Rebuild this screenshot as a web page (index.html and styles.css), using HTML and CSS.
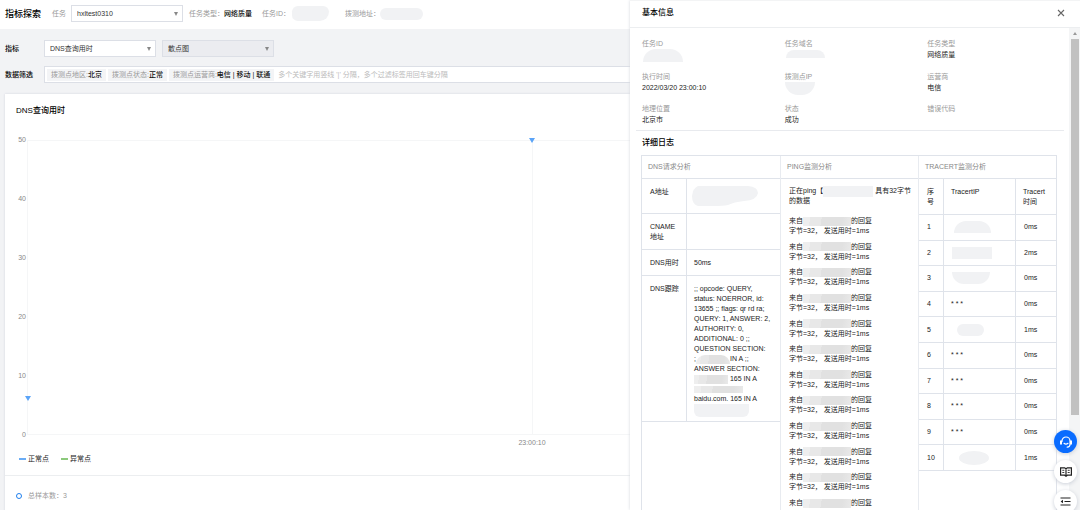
FILE: index.html
```html
<!DOCTYPE html>
<html lang="zh-CN">
<head>
<meta charset="utf-8">
<title>指标探索</title>
<link rel="stylesheet" href="styles.css">
</head>
<body>
<main class="page">
  <header class="topbar">
    <h1 class="page-title">指标探索</h1>
    <label class="muted" for="task">任务</label>
    <span class="select"><select id="task"><option>hxltest0310</option></select></span>
    <span class="fact"><span class="muted">任务类型：</span><b>网络质量</b></span>
    <span class="fact fact-id"><span class="muted">任务ID：</span><i class="mask mask-id"></i></span>
    <span class="fact"><span class="muted">拨测地址：</span><i class="mask mask-address"></i></span>
  </header>

  <section class="filters">
    <div class="filter-row">
      <label class="filter-name" for="metric">指标</label>
      <span class="select"><select id="metric"><option>DNS查询用时</option></select></span>
      <span class="select select-disabled"><select aria-label="图表类型" disabled><option>散点图</option></select></span>
    </div>
    <div class="filter-row">
      <label class="filter-name" for="filter">数据筛选</label>
      <div class="tagbox">
        <span class="tag">拨测点地区:<b>北京</b></span>
        <span class="tag">拨测点状态:<b>正常</b></span>
        <span class="tag">拨测点运营商:<b>电信 | 移动 | 联通</b></span>
        <input id="filter" type="text" placeholder="多个关键字用竖线 '|' 分隔，多个过滤标签用回车键分隔">
      </div>
    </div>
  </section>

  <section class="card">
    <h2 class="card-title">DNS查询用时</h2>
    <div class="chart">
      <div class="y-axis"><span>50</span><span>40</span><span>30</span><span>20</span><span>10</span><span>0</span></div>
      <div class="plot">
        <i class="point" style="left:0%;top:88%"></i>
        <i class="point" style="left:50%;top:0%"></i>
      </div>
      <div class="x-axis">23:00:10</div>
    </div>
    <div class="legend">
      <span class="legend-item"><i class="dash dash-ok"></i>正常点</span>
      <span class="legend-item"><i class="dash dash-bad"></i>异常点</span>
    </div>
    <div class="total"><i class="ring"></i>总样本数：3</div>
  </section>
</main>

<aside class="drawer">
  <header class="drawer-head">
    <h2 class="drawer-title">基本信息</h2>
    <button class="close" type="button" aria-label="关闭"><svg width="8" height="8" viewBox="0 0 8 8"><path d="M1 1l6 6M7 1L1 7" fill="none" stroke="#666" stroke-width="1.1"/></svg></button>
  </header>
  <div class="drawer-body">
    <div class="drawer-content">
      <dl class="info">
        <div><dt>任务ID</dt><dd><i class="mask dome"></i></dd></div>
        <div><dt>任务域名</dt><dd><i class="mask dome-low"></i></dd></div>
        <div><dt>任务类型</dt><dd>网络质量</dd></div>
        <div><dt>执行时间</dt><dd>2022/03/20 23:00:10</dd></div>
        <div><dt>拨测点IP</dt><dd><i class="mask bowl"></i></dd></div>
        <div><dt>运营商</dt><dd>电信</dd></div>
        <div><dt>地理位置</dt><dd>北京市</dd></div>
        <div><dt>状态</dt><dd>成功</dd></div>
        <div><dt>错误代码</dt><dd></dd></div>
      </dl>
      <h2 class="drawer-title log-title">详细日志</h2>
      <div class="log">
        <section class="log-col">
          <h3>DNS请求分析</h3>
          <table class="grid-table dns">
            <tr><th>A地址</th><td><svg class="blob" width="66" height="20" viewBox="0 0 66 20"><path d="M6 0H56Q66 1 66 7Q65 14 52 15Q42 16 36 19Q31 20 22 20H6Q0 18 0 10Q1 2 6 0Z" fill="#f1f2f4"/></svg></td></tr>
            <tr><th>CNAME<br>地址</th><td></td></tr>
            <tr><th>DNS用时</th><td>50ms</td></tr>
            <tr><th>DNS跟踪</th><td>;; opcode: QUERY,<br>status: NOERROR, id:<br>13655 ;; flags: qr rd ra;<br>QUERY: 1, ANSWER: 2,<br>AUTHORITY: 0,<br>ADDITIONAL: 0 ;;<br>QUESTION SECTION:<br>;<i class="smudge smudge-host"></i>IN A ;;<br>ANSWER SECTION:<br><i class="smudge smudge-name"></i> 165 IN A<br><i class="smudge smudge-ip"></i><br>baidu.com. 165 IN A<br><i class="mask mask-tail"></i></td></tr>
          </table>
        </section>
        <section class="log-col">
          <h3>PING监测分析</h3>
          <div class="ping">
            <p>正在ping【<i class="mask mask-ping"></i> 具有32字节<br>的数据</p>
            <ul class="replies">
              <li>来自<i class="smudge"></i>的回复<br>字节=32， 发送用时=1ms</li>
              <li>来自<i class="smudge"></i>的回复<br>字节=32， 发送用时=1ms</li>
              <li>来自<i class="smudge"></i>的回复<br>字节=32， 发送用时=1ms</li>
              <li>来自<i class="smudge"></i>的回复<br>字节=32， 发送用时=1ms</li>
              <li>来自<i class="smudge"></i>的回复<br>字节=32， 发送用时=1ms</li>
              <li>来自<i class="smudge"></i>的回复<br>字节=32， 发送用时=1ms</li>
              <li>来自<i class="smudge"></i>的回复<br>字节=32， 发送用时=1ms</li>
              <li>来自<i class="smudge"></i>的回复<br>字节=32， 发送用时=1ms</li>
              <li>来自<i class="smudge"></i>的回复<br>字节=32， 发送用时=1ms</li>
              <li>来自<i class="smudge"></i>的回复<br>字节=32， 发送用时=1ms</li>
              <li>来自<i class="smudge"></i>的回复<br>字节=32， 发送用时=1ms</li>
              <li>来自<i class="smudge"></i>的回复</li>
            </ul>
          </div>
        </section>
        <section class="log-col">
          <h3>TRACERT监测分析</h3>
          <table class="grid-table tracert">
            <thead><tr><th>序<br>号</th><th>TracertIP</th><th>Tracert<br>时间</th></tr></thead>
            <tbody>
              <tr><td>1</td><td><i class="mask hop hop-dome"></i></td><td>0ms</td></tr>
              <tr><td>2</td><td><i class="mask hop"></i></td><td>2ms</td></tr>
              <tr><td>3</td><td><i class="mask hop hop-bowl"></i></td><td>0ms</td></tr>
              <tr><td>4</td><td>* * *</td><td>0ms</td></tr>
              <tr><td>5</td><td><i class="mask hop hop-small"></i></td><td>1ms</td></tr>
              <tr><td>6</td><td>* * *</td><td>0ms</td></tr>
              <tr><td>7</td><td>* * *</td><td>0ms</td></tr>
              <tr><td>8</td><td>* * *</td><td>0ms</td></tr>
              <tr><td>9</td><td>* * *</td><td>0ms</td></tr>
              <tr><td>10</td><td><i class="mask hop hop-oval"></i></td><td>1ms</td></tr>
            </tbody>
          </table>
        </section>
      </div>
    </div>
    <div class="scrollbar"><i class="scroll-arrow"></i><i class="scroll-thumb"></i></div>
  </div>
</aside>

<nav class="floating">
  <button class="fab fab-primary" type="button" aria-label="在线客服"><svg width="14" height="14" viewBox="0 0 14 14" fill="none" stroke="#fff" stroke-width="1.2" stroke-linecap="round"><path d="M3 6.500V6a4 4 0 0 1 8 0v3.500q0 2.300-2.800 2.700M5 8.300q2 1.700 4 0"/><path d="M2 6.300v2.400M12 6.300v2.400" stroke-width="2"/></svg></button>
  <button class="fab" type="button" aria-label="文档"><svg width="12" height="10" viewBox="0 0 12 10" fill="none" stroke="#222" stroke-width="1.200"><path d="M.6.8h4L6 1.800 7.400.8h4v7.400h-4L6 9.200 4.600 8.200h-4zM6 1.800v7.400"/><path d="M2.300 3.300h2M2.300 5.500h2M7.700 3.300h2M7.700 5.500h2" stroke-width=".9"/></svg></button>
  <button class="fab" type="button" aria-label="目录"><svg width="11" height="9" viewBox="0 0 11 9" fill="none" stroke="#222" stroke-width="1.200"><path d="M.5 1h10M4.500 4.500h6M.5 8h10"/><path d="M3 2.800v3.400L.6 4.500z" fill="#222" stroke="none"/></svg></button>
</nav>
</body>
</html>
```

FILE: styles.css
```css
* { box-sizing: border-box; }

body {
  margin: 0;
  height: 100vh;
  overflow: hidden;
  position: relative;
  background: #f2f3f5;
  color: #222;
  font: 7px/10px "Liberation Sans", "Noto Sans CJK SC", sans-serif;
}

h1, h2, h3, p, ul, dl, dd { margin: 0; padding: 0; }
ul { list-style: none; }
button, input, select { font: inherit; color: inherit; }
b { font-weight: 500; color: #111; }
.muted { color: #999; }

.page { min-height: 100vh; display: flex; flex-direction: column; }

/* Top bar */
.topbar {
  display: flex;
  align-items: center;
  height: 29px;
  padding: 0 5px 2px;
  background: #fff;
  white-space: nowrap;
}
.page-title { font-size: 9px; font-weight: 500; line-height: 12px; color: #000; margin-right: 11px; }
.topbar label { margin-right: 5px; }
.topbar .select { margin-right: 6px; }
.fact { display: flex; align-items: center; margin-right: 10px; }
.fact-id { margin-right: 16px; }

.mask { display: inline-block; background: #f1f2f4; }
.mask-id { width: 37px; height: 15px; margin-left: 2px; border-radius: 9px 9px 14px 9px; }
.mask-address { width: 43px; height: 12px; border-radius: 6px; }

/* Selects */
.select { position: relative; display: inline-flex; width: 112px; height: 17px; }
.select select {
  appearance: none;
  width: 100%;
  padding: 0 14px 0 5px;
  border: 1px solid #dcdfe6;
  border-radius: 0;
  background: #fff;
  color: #333;
  opacity: 1;
}
.select::after {
  content: "";
  position: absolute;
  right: 5px;
  top: 7px;
  border: 2px solid transparent;
  border-top: 4px solid #888;
  border-bottom: 0;
}
.select-disabled select { background: #ebecf0; }

/* Filters */
.filters { display: flex; flex-direction: column; gap: 9px; padding: 11px 0 11px 5px; }
.filter-row { display: flex; align-items: center; }
.filter-row .select { margin-right: 6px; }
.filter-name { width: 39px; color: #000; font-weight: 500; }
.tagbox {
  flex: 1;
  display: flex;
  align-items: center;
  gap: 2px;
  height: 17px;
  padding: 0 2px;
  border: 1px solid #dcdfe6;
  background: #fff;
}
.tag { padding: 1px 4px; background: #f3f4f6; color: #999; white-space: nowrap; }
.tagbox input { flex: 1; min-width: 0; padding: 0 2px; border: 0; outline: 0; background: none; }
.tagbox input::placeholder { color: #bbb; }

/* Chart card */
.card {
  flex: 1;
  margin: 0 20px 0 5px;
  background: #fff;
  box-shadow: 0 0 2px #cfd3dc;
}
.card-title { padding: 11px 11px 0; font-size: 8px; line-height: 12px; font-weight: 500; color: #000; }
.chart {
  display: grid;
  grid-template-columns: 22px 1fr;
  padding: 18px 23px 0 0;
  color: #888;
}
.y-axis {
  display: flex;
  flex-direction: column;
  justify-content: space-between;
  align-items: flex-end;
  height: 305px;
  padding-right: 1px;
}
.plot {
  position: relative;
  margin: 5px 0;
  border: 1px solid #f5f6f7;
  background: linear-gradient(#f5f6f7, #f5f6f7) center / 1px 100% no-repeat;
}
.point {
  position: absolute;
  margin: -3px 0 0 -3px;
  border: 3px solid transparent;
  border-top: 5px solid #5ba4f8;
  border-bottom: 0;
}
.x-axis { grid-column: 2; margin-top: -2px; text-align: center; }
.legend { display: flex; gap: 12px; padding: 6px 14px 11px; border-bottom: 1px solid #eceef0; color: #222; }
.legend-item { display: flex; align-items: center; gap: 2px; }
.dash { width: 7px; height: 2px; background: #6aacf5; }
.dash-bad { background: #8cc97c; }
.total { display: flex; align-items: center; gap: 6px; padding: 15px 11px; color: #999; }
.ring { width: 6px; height: 6px; border: 1px solid #1f7fee; border-radius: 50%; }

/* Drawer */
.drawer {
  position: absolute;
  top: 0;
  right: 0;
  bottom: 0;
  width: calc(100% * 5 / 12);
  display: flex;
  flex-direction: column;
  overflow: hidden;
  background: #fff;
  border-top: 1px solid #f3f4f5;
  box-shadow: 0 0 3px #d5d8de;
}
.drawer-head {
  display: flex;
  align-items: center;
  justify-content: space-between;
  height: 27px;
  flex: none;
  padding: 0 15px 2px 12px;
  border-bottom: 1px solid #eceef0;
}
.drawer-title { font-size: 8px; line-height: 12px; font-weight: 500; color: #000; }
.close { display: flex; padding: 0; border: 0; background: none; }
.drawer-body { flex: 1; min-height: 0; display: flex; }
.drawer-content { flex: 1; min-width: 0; padding: 0 5px 0 6px; }

.info {
  display: grid;
  grid-template-columns: repeat(3, 1fr);
  gap: 10px 12px;
  padding: 10px 6px 5px;
  border-bottom: 1px solid #e8eaee;
  line-height: 11px;
}
.info dt { color: #999; }
.info dd { height: 11px; color: #222; }
.info .mask { display: block; }
.dome { width: 40px; height: 13px; border-radius: 14px 14px 0 0; margin-left: 1px; }
.dome-low { width: 39px; height: 8px; border-radius: 8px 8px 0 0; margin: 1px; }
.bowl { width: 30px; height: 13px; border-radius: 0 0 14px 14px; }
.log-title { padding: 6px; }

/* Log columns */
.log {
  display: grid;
  grid-template-columns: repeat(3, 1fr);
  margin: 0 7px 0 5px;
  min-height: 100%;
  border: 1px solid #dfe3ea;
}
.log-col + .log-col { border-left: 1px solid #e8ebf0; }
.log-col h3 {
  padding: 6px;
  border-bottom: 1px solid #dfe3ea;
  font-size: 7px;
  line-height: 10px;
  font-weight: 400;
  color: #888;
}
.grid-table { width: 100%; border-collapse: separate; border-spacing: 0; }
.grid-table th, .grid-table td {
  padding: 8px 0 7px 8px;
  border-bottom: 1px solid #dfe3ea;
  font-weight: 400;
  text-align: left;
  vertical-align: top;
  white-space: nowrap;
}
.grid-table th + *, .grid-table td + td { border-left: 1px solid #dfe3ea; }
.grid-table td:nth-child(2), .grid-table th + th { padding-left: 7px; }
.dns th { width: 44px; }
.blob { display: block; margin: -1px 0 0 -2px; }
.tracert th:first-child { width: 24px; }
.tracert th:last-child { width: 41px; }
.tracert { height: 292px; }
.grid-table.tracert tbody td { padding-top: 0; padding-bottom: 0; vertical-align: middle; }
.hop { display: block; width: 40px; height: 12px; margin: -2px 0 -2px 1px; }
.hop-dome { width: 37px; margin-left: 3px; border-radius: 12px 12px 0 0; }
.hop-bowl { width: 38px; border-radius: 0 0 12px 12px; }
.hop-small { width: 27px; margin-left: 6px; border-radius: 8px; }
.hop-oval { width: 30px; height: 14px; margin: -3px 0 -3px 8px; border-radius: 50%; }

.smudge {
  display: inline-block;
  width: 48px;
  height: 9px;
  vertical-align: middle;
  background: linear-gradient(100deg, #eee 0 15%, #e8e8e8 15% 38%, #e1e1e1 38% 80%, #e9e9e9);
}
.smudge-host { width: 34px; border-radius: 12px 12px 0 0; }
.smudge-name { width: 34px; }
.smudge-ip { width: 49px; height: 7px; }
.mask-tail { width: 55px; height: 13px; vertical-align: top; margin-bottom: -3px; border-radius: 0 0 6px 6px; }

.ping { padding: 7px 0 0 8px; white-space: nowrap; }
.mask-ping { width: 50px; height: 11px; vertical-align: middle; margin: -1px 0; }
.replies {
  display: flex;
  flex-direction: column;
  justify-content: space-between;
  height: 292px;
  margin-top: 10px;
}

.scrollbar { width: 11px; display: flex; flex-direction: column; align-items: center; background: #f4f5f6; }
.scroll-arrow { margin: 4px 0 3px; border: 2px solid transparent; border-bottom: 3px solid #999; border-top: 0; }
.scroll-thumb { width: 8px; height: 78%; margin-top: 1px; background: #c1c1c1; }

/* Floating buttons */
.floating {
  position: absolute;
  right: 3px;
  bottom: -3px;
  display: flex;
  flex-direction: column;
  gap: 7px;
}
.fab {
  display: flex;
  align-items: center;
  justify-content: center;
  width: 23px;
  height: 23px;
  padding: 0;
  border: 0;
  border-radius: 50%;
  background: #fff;
  box-shadow: 0 1px 4px #c8cdd6;
}
.fab-primary { background: #0a6cff; }
```
